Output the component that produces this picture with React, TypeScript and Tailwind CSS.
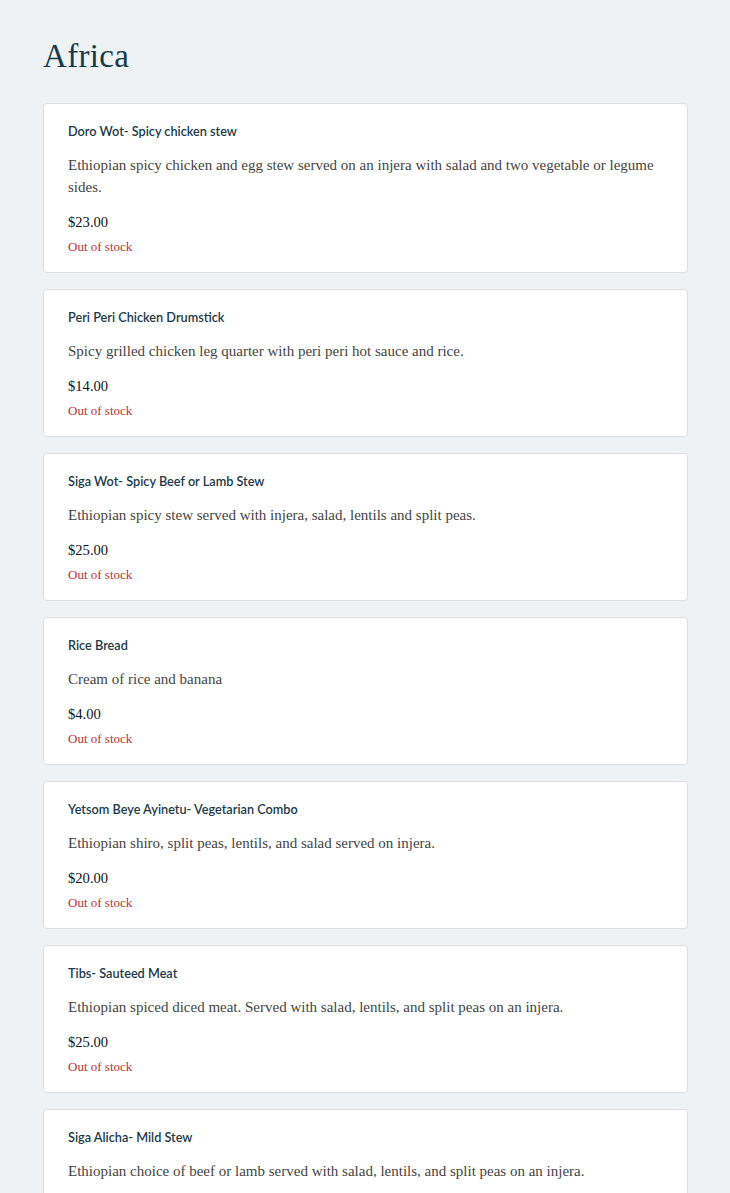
const items = [
  {
    name: 'Doro Wot- Spicy chicken stew',
    desc: 'Ethiopian spicy chicken and egg stew served on an injera with salad and two vegetable or legume sides.',
    price: '$23.00',
  },
  {
    name: 'Peri Peri Chicken Drumstick',
    desc: 'Spicy grilled chicken leg quarter with peri peri hot sauce and rice.',
    price: '$14.00',
  },
  {
    name: 'Siga Wot- Spicy Beef or Lamb Stew',
    desc: 'Ethiopian spicy stew served with injera, salad, lentils and split peas.',
    price: '$25.00',
  },
  { name: 'Rice Bread', desc: 'Cream of rice and banana', price: '$4.00' },
  {
    name: 'Yetsom Beye Ayinetu- Vegetarian Combo',
    desc: 'Ethiopian shiro, split peas, lentils, and salad served on injera.',
    price: '$20.00',
  },
  {
    name: 'Tibs- Sauteed Meat',
    desc: 'Ethiopian spiced diced meat. Served with salad, lentils, and split peas on an injera.',
    price: '$25.00',
  },
  {
    name: 'Siga Alicha- Mild Stew',
    desc: 'Ethiopian choice of beef or lamb served with salad, lentils, and split peas on an injera.',
    price: '$25.00',
  },
];

const App = () => {
  return (
    <div className="min-h-screen bg-[#eef2f5] pl-[43px] pr-[42px] pt-[36px] pb-10">
      <h1 className="font-['Liberation_Serif',serif] text-[33px] leading-[40px] text-[#173a4a] tracking-[0.3px]">
        Africa
      </h1>

      <div className="mt-[27px] flex flex-col gap-4">
        {items.map((item) => (
          <div
            key={item.name}
            className="bg-white border border-[#d9dee3] rounded-[4px] px-6 pt-[18px] pb-[17px]"
          >
            <div className="font-['Lato',sans-serif] text-[12.7px] leading-[18px] font-semibold text-[#1b3a4b]">
              {item.name}
            </div>
            <p className="mt-[14px] font-['Liberation_Serif',serif] text-[15px] leading-[22px] text-[#444]">
              {item.desc}
            </p>
            <div className="mt-[14px] font-['Liberation_Serif',serif] text-[14.6px] leading-[20px] text-[#111]">
              {item.price}
            </div>
            <div className="mt-[7px] font-['Liberation_Serif',serif] text-[13px] leading-[16px] text-[#c53030]">
              Out of stock
            </div>
          </div>
        ))}
      </div>
    </div>
  );
};

export default App;
